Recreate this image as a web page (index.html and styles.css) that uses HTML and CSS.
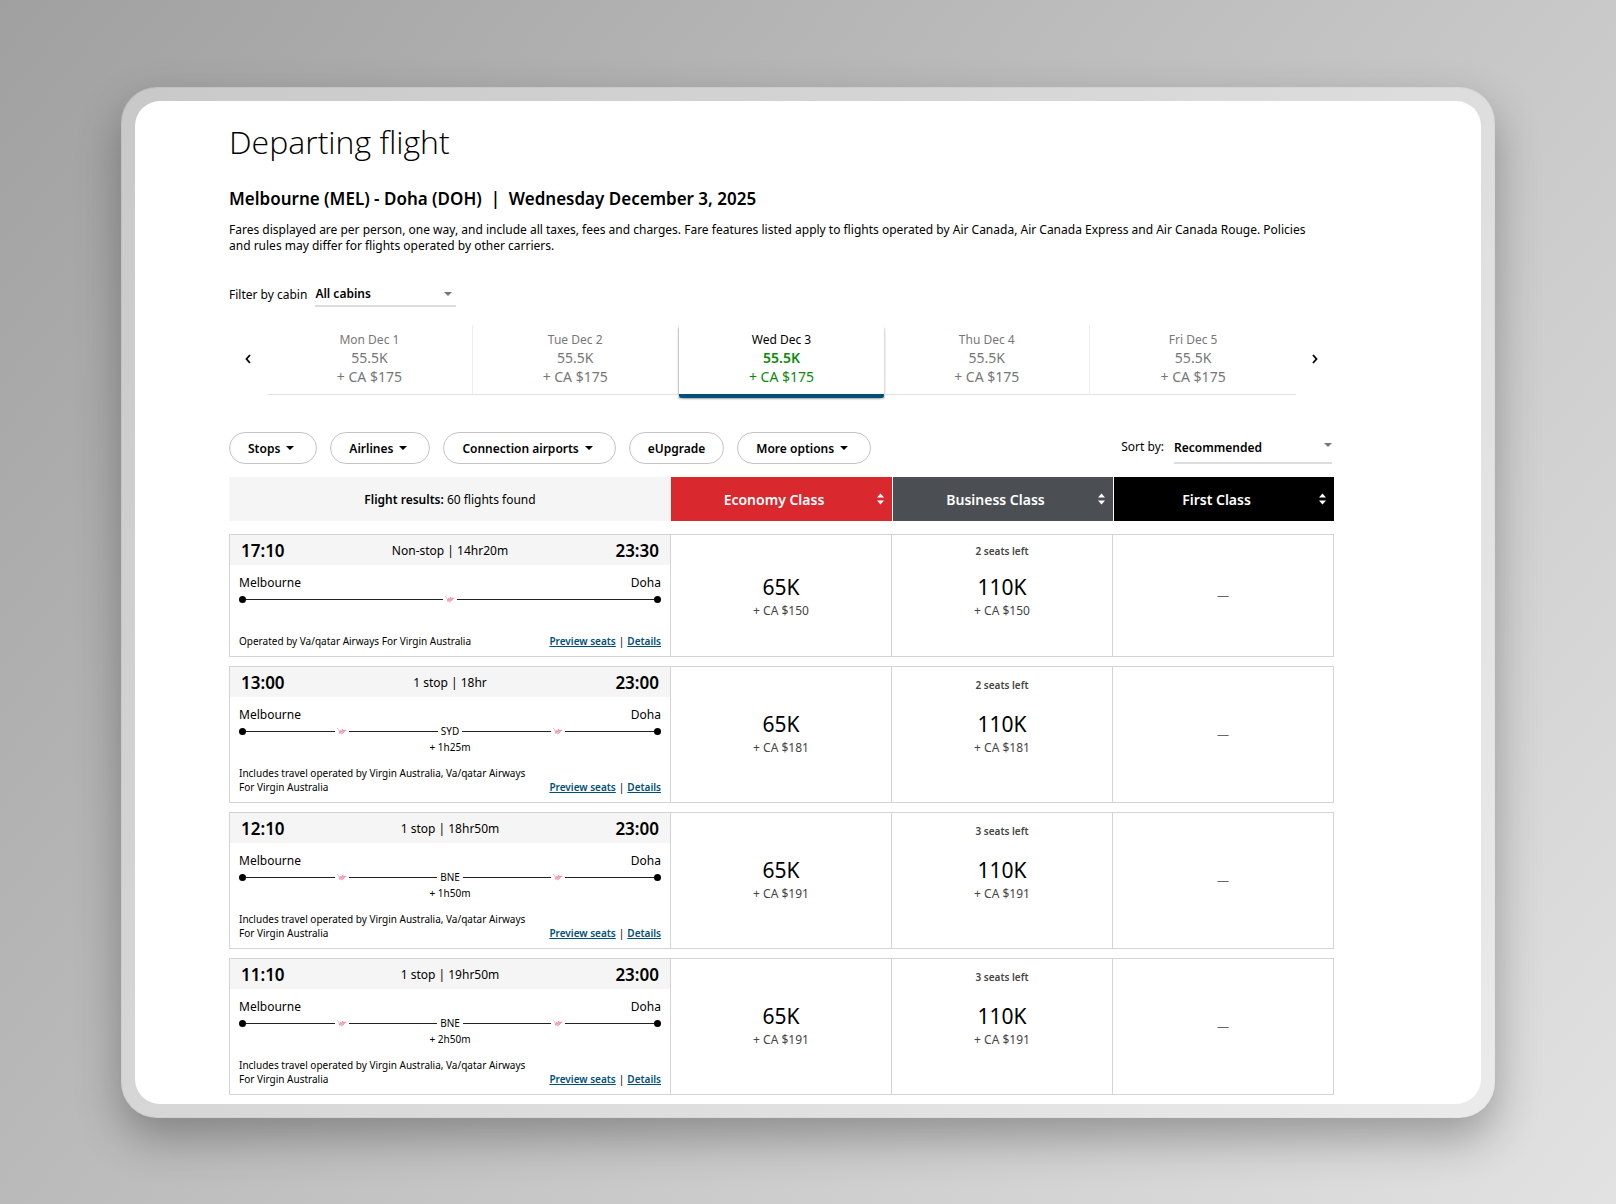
FILE: index.html
```html
<!DOCTYPE html>
<html lang="en">
<head>
  <meta charset="UTF-8">
  <meta name="viewport" content="width=device-width, initial-scale=1.0">
  <title>Departing flight</title>
  <link rel="stylesheet" href="styles.css">
</head>
<body>
  <svg class="defs" aria-hidden="true">
    <symbol id="carrier" viewBox="0 0 14 10">
      <path d="M2 2 L3.5 3.5 L5 7" fill="none" stroke="#d3b6be" stroke-width="0.9"/>
      <path d="M4.8 7.8 L5.4 4.4 L6.4 6.2 L7.4 3.2 L8 5 L9 3.8 L9.4 4.6 L11.5 4 M9.6 5.2 L8 6.4 L6.4 8 Z" fill="#f9b9c6" stroke="#f0849f" stroke-width="0.8"/>
    </symbol>
    <symbol id="sort" viewBox="0 0 7 12">
      <path d="M0 4.5 L3.5 0.5 L7 4.5 Z M0 7.5 L3.5 11.5 L7 7.5 Z" fill="#fff"/>
    </symbol>
  </svg>

  <div class="frame">
    <main class="screen">
      <h1>Departing flight</h1>
      <h2>Melbourne (MEL) - Doha (DOH)&nbsp; |&nbsp; Wednesday December 3, 2025</h2>
      <p class="intro">Fares displayed are per person, one way, and include all taxes, fees and charges. Fare features listed apply to flights operated by Air Canada, Air Canada Express and Air Canada Rouge. Policies and rules may differ for flights operated by other carriers.</p>

      <div class="cabin-filter">
        <label for="cabin">Filter by cabin</label>
        <span class="select cabin-select">
          <select id="cabin">
            <option>All cabins</option>
          </select>
        </span>
      </div>

      <nav class="dates">
        <button class="arrow" aria-label="Previous dates">
          <svg width="6" height="10" viewBox="0 0 6 10"><path d="M5 1 L1.5 5 L5 9" fill="none" stroke="#000" stroke-width="1.8"/></svg>
        </button>
        <div class="tabs">
          <button class="tab"><span class="day">Mon Dec 1</span><span>55.5K</span><span>+ CA $175</span></button>
          <button class="tab"><span class="day">Tue Dec 2</span><span>55.5K</span><span>+ CA $175</span></button>
          <button class="tab active"><span class="day">Wed Dec 3</span><span class="points">55.5K</span><span>+ CA $175</span></button>
          <button class="tab"><span class="day">Thu Dec 4</span><span>55.5K</span><span>+ CA $175</span></button>
          <button class="tab"><span class="day">Fri Dec 5</span><span>55.5K</span><span>+ CA $175</span></button>
        </div>
        <button class="arrow" aria-label="Next dates">
          <svg width="6" height="10" viewBox="0 0 6 10"><path d="M1 1 L4.5 5 L1 9" fill="none" stroke="#000" stroke-width="1.8"/></svg>
        </button>
      </nav>

      <div class="toolbar">
        <button class="pill caret">Stops</button>
        <button class="pill caret">Airlines</button>
        <button class="pill caret">Connection airports</button>
        <button class="pill">eUpgrade</button>
        <button class="pill caret">More options</button>
        <div class="sort">
          <label for="sortby">Sort by:</label>
          <span class="select sort-select">
            <select id="sortby">
              <option>Recommended</option>
            </select>
          </span>
        </div>
      </div>

      <table class="results">
        <thead>
          <tr>
            <th class="found"><b>Flight results:</b> 60 flights found</th>
            <th class="economy"><button>Economy Class <svg class="sort-icon"><use href="#sort"/></svg></button></th>
            <th class="business"><button>Business Class <svg class="sort-icon"><use href="#sort"/></svg></button></th>
            <th class="first"><button>First Class <svg class="sort-icon"><use href="#sort"/></svg></button></th>
          </tr>
        </thead>
        <tbody>
          <tr>
            <td class="flight">
              <div class="times"><b>17:10</b><span>Non-stop | 14hr20m</span><b>23:30</b></div>
              <div class="cities"><span>Melbourne</span><span>Doha</span></div>
              <div class="route"><i class="dot"></i><i class="line"></i><svg class="carrier"><use href="#carrier"/></svg><i class="line"></i><i class="dot"></i></div>
              <div class="layover"></div>
              <div class="bottom">
                <p>Operated by Va/qatar Airways For Virgin Australia</p>
                <div class="links"><a href="#">Preview seats</a><span>|</span><a href="#">Details</a></div>
              </div>
            </td>
            <td class="fare"><div class="seats"></div><div class="price">65K</div><div class="tax">+ CA $150</div></td>
            <td class="fare"><div class="seats">2 seats left</div><div class="price">110K</div><div class="tax">+ CA $150</div></td>
            <td class="none">—</td>
          </tr>
          <tr class="with-stop">
            <td class="flight">
              <div class="times"><b>13:00</b><span>1 stop | 18hr</span><b>23:00</b></div>
              <div class="cities"><span>Melbourne</span><span>Doha</span></div>
              <div class="route"><i class="dot"></i><i class="line"></i><svg class="carrier"><use href="#carrier"/></svg><i class="line"></i><span class="code">SYD</span><i class="line"></i><svg class="carrier"><use href="#carrier"/></svg><i class="line"></i><i class="dot"></i></div>
              <div class="layover">+ 1h25m</div>
              <div class="bottom">
                <p>Includes travel operated by Virgin Australia, Va/qatar Airways For Virgin Australia</p>
                <div class="links"><a href="#">Preview seats</a><span>|</span><a href="#">Details</a></div>
              </div>
            </td>
            <td class="fare"><div class="seats"></div><div class="price">65K</div><div class="tax">+ CA $181</div></td>
            <td class="fare"><div class="seats">2 seats left</div><div class="price">110K</div><div class="tax">+ CA $181</div></td>
            <td class="none">—</td>
          </tr>
          <tr class="with-stop">
            <td class="flight">
              <div class="times"><b>12:10</b><span>1 stop | 18hr50m</span><b>23:00</b></div>
              <div class="cities"><span>Melbourne</span><span>Doha</span></div>
              <div class="route"><i class="dot"></i><i class="line"></i><svg class="carrier"><use href="#carrier"/></svg><i class="line"></i><span class="code">BNE</span><i class="line"></i><svg class="carrier"><use href="#carrier"/></svg><i class="line"></i><i class="dot"></i></div>
              <div class="layover">+ 1h50m</div>
              <div class="bottom">
                <p>Includes travel operated by Virgin Australia, Va/qatar Airways For Virgin Australia</p>
                <div class="links"><a href="#">Preview seats</a><span>|</span><a href="#">Details</a></div>
              </div>
            </td>
            <td class="fare"><div class="seats"></div><div class="price">65K</div><div class="tax">+ CA $191</div></td>
            <td class="fare"><div class="seats">3 seats left</div><div class="price">110K</div><div class="tax">+ CA $191</div></td>
            <td class="none">—</td>
          </tr>
          <tr class="with-stop">
            <td class="flight">
              <div class="times"><b>11:10</b><span>1 stop | 19hr50m</span><b>23:00</b></div>
              <div class="cities"><span>Melbourne</span><span>Doha</span></div>
              <div class="route"><i class="dot"></i><i class="line"></i><svg class="carrier"><use href="#carrier"/></svg><i class="line"></i><span class="code">BNE</span><i class="line"></i><svg class="carrier"><use href="#carrier"/></svg><i class="line"></i><i class="dot"></i></div>
              <div class="layover">+ 2h50m</div>
              <div class="bottom">
                <p>Includes travel operated by Virgin Australia, Va/qatar Airways For Virgin Australia</p>
                <div class="links"><a href="#">Preview seats</a><span>|</span><a href="#">Details</a></div>
              </div>
            </td>
            <td class="fare"><div class="seats"></div><div class="price">65K</div><div class="tax">+ CA $191</div></td>
            <td class="fare"><div class="seats">3 seats left</div><div class="price">110K</div><div class="tax">+ CA $191</div></td>
            <td class="none">—</td>
          </tr>
        </tbody>
      </table>
    </main>
  </div>
</body>
</html>
```
FILE: styles.css
```css
* {
  box-sizing: border-box;
}
body {
  margin: 0;
  min-height: 100vh;
  padding: 87px 121px;
  font-family: "Noto Sans", "Open Sans", sans-serif;
  font-size: 12px;
  color: #000;
  background: linear-gradient(130deg, #a0a0a0 0%, #bebebe 45%, #e2e2e2 100%);
}
h1, h2, p {
  margin: 0;
}
button, select {
  font: inherit;
  color: inherit;
  background: none;
  border: 0;
  padding: 0;
  cursor: pointer;
}
.defs {
  position: absolute;
  width: 0;
  height: 0;
}
.frame {
  padding: 13px;
  border: 1px solid rgba(255,255,255,0.3);
  border-radius: 36px;
  background: rgba(255,255,255,0.4);
  background-clip: padding-box;
  box-shadow: 0 20px 45px rgba(0,0,0,0.3);
}
.screen {
  padding: 19px 147px 0 94px;
  background: #fff;
  border-radius: 25px;
}
h1 {
  font-family: "Open Sans", sans-serif;
  font-size: 32px;
  font-weight: 300;
  line-height: 44px;
}
h2 {
  margin-top: 23px;
  font-size: 17px;
  font-weight: 600;
  line-height: 24px;
}
.intro {
  margin-top: 11px;
  padding-right: 16px;
  font-size: 12px;
  line-height: 16px;
}

/* cabin filter */
.cabin-filter {
  display: flex;
  align-items: center;
  gap: 8px;
  margin-top: 27px;
}
.select {
  position: relative;
  border-bottom: 2px solid #ddd;
}
.select select {
  width: 100%;
  height: 24px;
  appearance: none;
  font-weight: 600;
}
.select::after {
  content: "";
  position: absolute;
  right: 4px;
  top: 11px;
  border: 4px solid transparent;
  border-top-color: #777;
  border-bottom: 0;
  pointer-events: none;
}
.cabin-select {
  width: 141px;
}

/* date tabs */
.dates {
  display: flex;
  align-items: center;
  margin-top: 18px;
}
.arrow {
  width: 38px;
  height: 24px;
  margin-bottom: 4px;
}
.tabs {
  flex: 1;
  display: grid;
  grid-template-columns: repeat(5, 1fr);
}
.tab {
  display: flex;
  flex-direction: column;
  align-items: center;
  padding: 6px 0 8px;
  height: 70px;
  font-size: 14px;
  line-height: 19px;
  color: #777;
  border-bottom: 1px solid #e4e4e4;
  border-right: 1px solid #eee;
}
.tab:last-child {
  border-right: 0;
}
.day {
  font-size: 12px;
  line-height: 17px;
}
.tab.active {
  height: 73px;
  color: #0b8a0b;
  border-right: 0;
  border-bottom: 4px solid #005078;
  border-radius: 2px;
  box-shadow: -2px 2px 2px -1px rgba(0,0,0,0.2), 2px 2px 2px -1px rgba(0,0,0,0.2);
}
.active .day {
  color: #000;
}
.points {
  font-weight: 600;
}

/* filter buttons */
.toolbar {
  display: flex;
  align-items: center;
  gap: 13px;
  margin-top: 34px;
}
.pill {
  height: 32px;
  padding: 0 18px;
  border: 1px solid #c4c4c4;
  border-radius: 16px;
  font-weight: 600;
}
.caret::after {
  content: "";
  display: inline-block;
  margin: 0 4px 3px 6px;
  border: 4px solid transparent;
  border-top-color: #000;
  border-bottom: 0;
}
.sort {
  display: flex;
  align-items: center;
  gap: 10px;
  margin-left: auto;
  padding-right: 2px;
}
.sort label {
  padding-bottom: 4px;
}
.sort-select {
  width: 158px;
}
.sort-select select {
  height: 30px;
}
.sort-select::after {
  right: 0;
}

/* results */
.results {
  width: 100%;
  table-layout: fixed;
  border-collapse: separate;
  border-spacing: 0 9px;
  margin-top: 4px;
}
th {
  width: 20%;
  height: 48px;
  padding: 0;
  border-left: 1px solid #fff;
  border-bottom: 4px solid transparent;
  background-clip: padding-box;
  color: #fff;
  font-size: 14px;
  font-weight: 600;
}
th button {
  display: flex;
  align-items: center;
  justify-content: center;
  width: 100%;
  height: 44px;
  padding-right: 8px;
}
.sort-icon {
  width: 7px;
  height: 12px;
  margin-left: auto;
}
th button::before {
  content: "";
  margin-right: auto;
}
.found {
  width: 40%;
  background-color: #f5f5f5;
  color: #000;
  font-size: 12px;
  font-weight: 400;
  border-left: 0;
}
b {
  font-weight: 600;
}
.economy {
  background-color: #d9282e;
  border-left: 0;
}
.business {
  background-color: #4b4f54;
}
.first {
  background-color: #000;
}
td {
  padding: 0;
  border: 1px solid #d4d4d4;
  border-left: 0;
}
td.flight {
  border-left: 1px solid #d4d4d4;
}
.times {
  display: flex;
  align-items: center;
  justify-content: space-between;
  height: 30px;
  padding: 0 11px;
  background: #f5f5f5;
}
.times b {
  font-size: 17px;
}
.cities {
  display: flex;
  justify-content: space-between;
  padding: 9px 9px 0;
  line-height: 18px;
}
.route {
  display: flex;
  align-items: center;
  height: 14px;
  padding: 0 9px;
}
.dot {
  width: 7px;
  height: 7px;
  border-radius: 50%;
  background: #000;
}
.line {
  flex: 1;
  height: 1px;
  background: #222;
}
.carrier {
  width: 14px;
  height: 10px;
}
.code {
  padding: 0 3px;
  font-size: 10px;
}
.layover {
  height: 16px;
  font-size: 10px;
  line-height: 18px;
  text-align: center;
}
.bottom {
  display: flex;
  align-items: flex-end;
  justify-content: space-between;
  gap: 9px;
  padding: 12px 9px 8px;
  font-size: 10px;
  line-height: 14px;
}
.links {
  display: flex;
  gap: 3px;
  flex-shrink: 0;
}
.links a {
  color: #005078;
  font-weight: 600;
}
.fare {
  padding-top: 9px;
  text-align: center;
  vertical-align: top;
}
.seats {
  height: 15px;
  margin-bottom: 15px;
  font-size: 10px;
  font-weight: 600;
  line-height: 15px;
  color: #444;
}
.price {
  font-size: 21px;
  line-height: 26px;
}
.tax {
  font-size: 12px;
  line-height: 21px;
  color: #444;
}
.with-stop .fare {
  padding-top: 11px;
}
.with-stop .seats {
  margin-bottom: 18px;
}
.none {
  text-align: center;
  font-size: 12px;
  color: #666;
}
```
